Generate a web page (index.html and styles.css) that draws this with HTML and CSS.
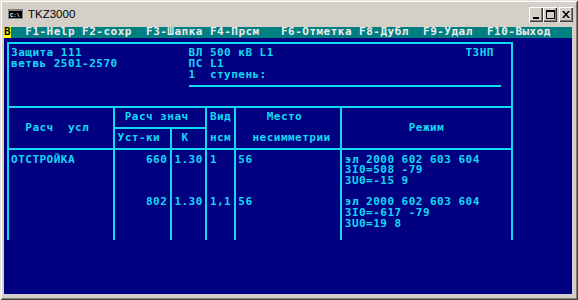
FILE: index.html
```html
<!DOCTYPE html>
<html>
<head>
    <meta charset="utf-8">
    <title>TKZ3000</title>
    <link rel="stylesheet" href="styles.css">
</head>
<body>
<div class="window">
    <div class="titlebar">
        <svg class="app-icon" width="15" height="10" viewBox="0 0 15 10">
            <rect x="0" y="0" width="15" height="10" fill="#808080"/>
            <rect x="1" y="2" width="13" height="7" fill="#000"/>
            <text x="2" y="8" font-size="5.5" font-family="Liberation Mono" font-weight="bold" fill="#fff">C:\</text>
        </svg>
        <span class="title">TKZ3000</span>
        <div class="caption-buttons">
            <span class="cap-btn">
                <svg width="8" height="8" viewBox="0 0 8 8"><rect x="1" y="6" width="6" height="2" fill="#000"/></svg>
            </span>
            <span class="cap-btn">
                <svg width="9" height="9" viewBox="0 0 9 9"><path d="M0.5 0.5h8v8h-8z" fill="none" stroke="#000"/><rect x="0" y="0" width="9" height="2" fill="#000"/></svg>
            </span>
            <span class="cap-btn cap-close">
                <svg width="8" height="7" viewBox="0 0 8 7"><path d="M0 0h2l2 2.5 2-2.5h2l-3 3.5 3 3.5h-2l-2-2.5-2 2.5h-2l3-3.5z" fill="#000"/></svg>
            </span>
        </div>
    </div>

    <div class="console">
        <div class="menubar"><span class="hot">B</span><span>  F1-Help F2-сохр  F3-Шапка F4-Прсм   F6-Отметка F8-Дубл  F9-Удал  F10-Выход</span></div>

        <div class="frame">
            <div class="head">
                <div class="head-left">
                    <div class="ln">Защита 111</div>
                    <div class="ln">ветвь 2501-2570</div>
                </div>
                <div class="head-right">
                    <div class="head-row"><span class="ln">ВЛ 500 кВ L1</span><span class="ln">ТЗНП</span></div>
                    <div class="ln">ПС L1</div>
                    <div class="ln">1  ступень:</div>
                    <div class="rule"></div>
                </div>
            </div>

            <div class="thead">
                <div class="cell h-cond">  Расч  усл</div>
                <div class="cell h-calc"> Расч знач</div>
                <div class="cell h-kind">Вид

нсм</div>
                <div class="cell h-place">    Место

  несимметрии</div>
                <div class="cell h-mode">         Режим</div>
                <div class="cell h-set">Уст-ки</div>
                <div class="cell h-k"> К</div>
            </div>

            <div class="tbody">
                <div class="cell first">ОТСТРОЙКА</div>
                <div class="cell first num">660</div>
                <div class="cell first">1.30</div>
                <div class="cell first">1</div>
                <div class="cell first">56</div>
                <div class="cell first">эл 2000 602 603 604
3I0=508 -79
3U0=-15 9</div>

                <div class="cell"></div>
                <div class="cell num">802</div>
                <div class="cell">1.30</div>
                <div class="cell">1,1</div>
                <div class="cell">56</div>
                <div class="cell">эл 2000 602 603 604
3I0=-617 -79
3U0=19 8</div>
            </div>
        </div>
    </div>
</div>
</body>
</html>
```

FILE: styles.css
```css
body{
	margin: 0;
	background-color: #d4d0c8;
}

.window{
	width: 578px;
	height: 300px;
	box-sizing: border-box;
	padding: 0 6px 6px 4px;
	display: flex;
	flex-direction: column;
	background-color: #d4d0c8;
	box-shadow: inset 1px 1px #e4e2dc, inset -1px -1px #404040, inset 2px 2px #ffffff, inset -2px -2px #808080;
}

/* title bar */
.titlebar{
	height: 27px;
	flex: none;
	display: flex;
	align-items: center;
	font-family: "Liberation Sans", sans-serif;
	font-size: 11.5px;
	color: #000;
}

.app-icon{
	margin-left: 4px;
	margin-right: 5px;
	margin-top: 1px;
}

.caption-buttons{
	margin-left: auto;
	margin-right: -1px;
	align-self: flex-start;
	margin-top: 7px;
	display: flex;
}

.cap-btn{
	width: 14px;
	height: 15px;
	box-sizing: border-box;
	display: flex;
	align-items: center;
	justify-content: center;
	background-color: #d4d0c8;
	box-shadow: inset 1px 1px #ffffff, inset -1px -1px #404040, inset -2px -2px #808080;
}

.cap-close{
	margin-left: 2px;
}

/* console */
.console{
	--cw: 7.1px;
	--lh: 10.65px;
	--fg: #12d8f4;
	--cols: calc(var(--cw)*15 - 2px) calc(var(--cw)*8 - 2px) calc(var(--cw)*5 - 2px) calc(var(--cw)*4 - 2px) calc(var(--cw)*15 - 2px) calc(var(--cw)*24 - 2px);
	flex: 1;
	background-color: #000080;
	color: var(--fg);
	font-family: "DejaVu Sans Mono", monospace;
	font-weight: bold;
	font-size: 11px;
	letter-spacing: 0.48px;
	line-height: var(--lh);
}

.ln,
.cell,
.menubar span{
	white-space: pre;
}

.menubar{
	height: var(--lh);
	display: flex;
	background-color: #008080;
	color: #ececec;
}

.hot{
	width: var(--cw);
	background-color: #ffff00;
	color: #000;
}

.frame{
	box-sizing: border-box;
	width: calc(var(--cw)*71 + 2px);
	margin-top: calc(var(--lh)/2 - 1px);
	margin-left: calc(var(--cw)/2 - 1px);
	border: 2px solid var(--fg);
	border-bottom: none;
}

.head{
	box-sizing: border-box;
	height: calc(var(--lh)*6 - 2px);
	padding-top: calc(var(--lh)/2 - 1px);
	padding-left: calc(var(--cw)/2 - 1px);
	display: flex;
}

.head-left{
	width: calc(var(--cw)*25);
}

.head-right{
	width: calc(var(--cw)*44);
}

.head-row{
	display: flex;
	justify-content: space-between;
	padding-right: var(--cw);
}

.rule{
	height: 2px;
	margin-top: calc(var(--lh)/2 - 1px);
	background-color: var(--fg);
}

.thead{
	display: grid;
	grid-template-columns: var(--cols);
	grid-template-rows: calc(var(--lh)*2 - 2px) calc(var(--lh)*2 - 2px);
	gap: 2px;
	padding: 2px 0;
	background-color: var(--fg);
}

.cell{
	padding: 0 calc(var(--cw)/2 - 1px);
	background-color: #000080;
}

.thead .cell{
	display: flex;
	flex-direction: column;
	justify-content: center;
}

.h-cond{ grid-column: 1; grid-row: 1 / 3; }
.h-calc{ grid-column: 2 / 4; grid-row: 1; }
.h-kind{ grid-column: 4; grid-row: 1 / 3; }
.h-place{ grid-column: 5; grid-row: 1 / 3; }
.h-mode{ grid-column: 6; grid-row: 1 / 3; }
.h-set{ grid-column: 2; grid-row: 2; }
.h-k{ grid-column: 3; grid-row: 2; }

.tbody{
	display: grid;
	grid-template-columns: var(--cols);
	grid-template-rows: calc(var(--lh)*4.5 - 1px) calc(var(--lh)*4);
	column-gap: 2px;
	background-color: var(--fg);
}

.tbody .first{
	padding-top: calc(var(--lh)/2 - 1px);
}

.num{
	text-align: right;
}
```
